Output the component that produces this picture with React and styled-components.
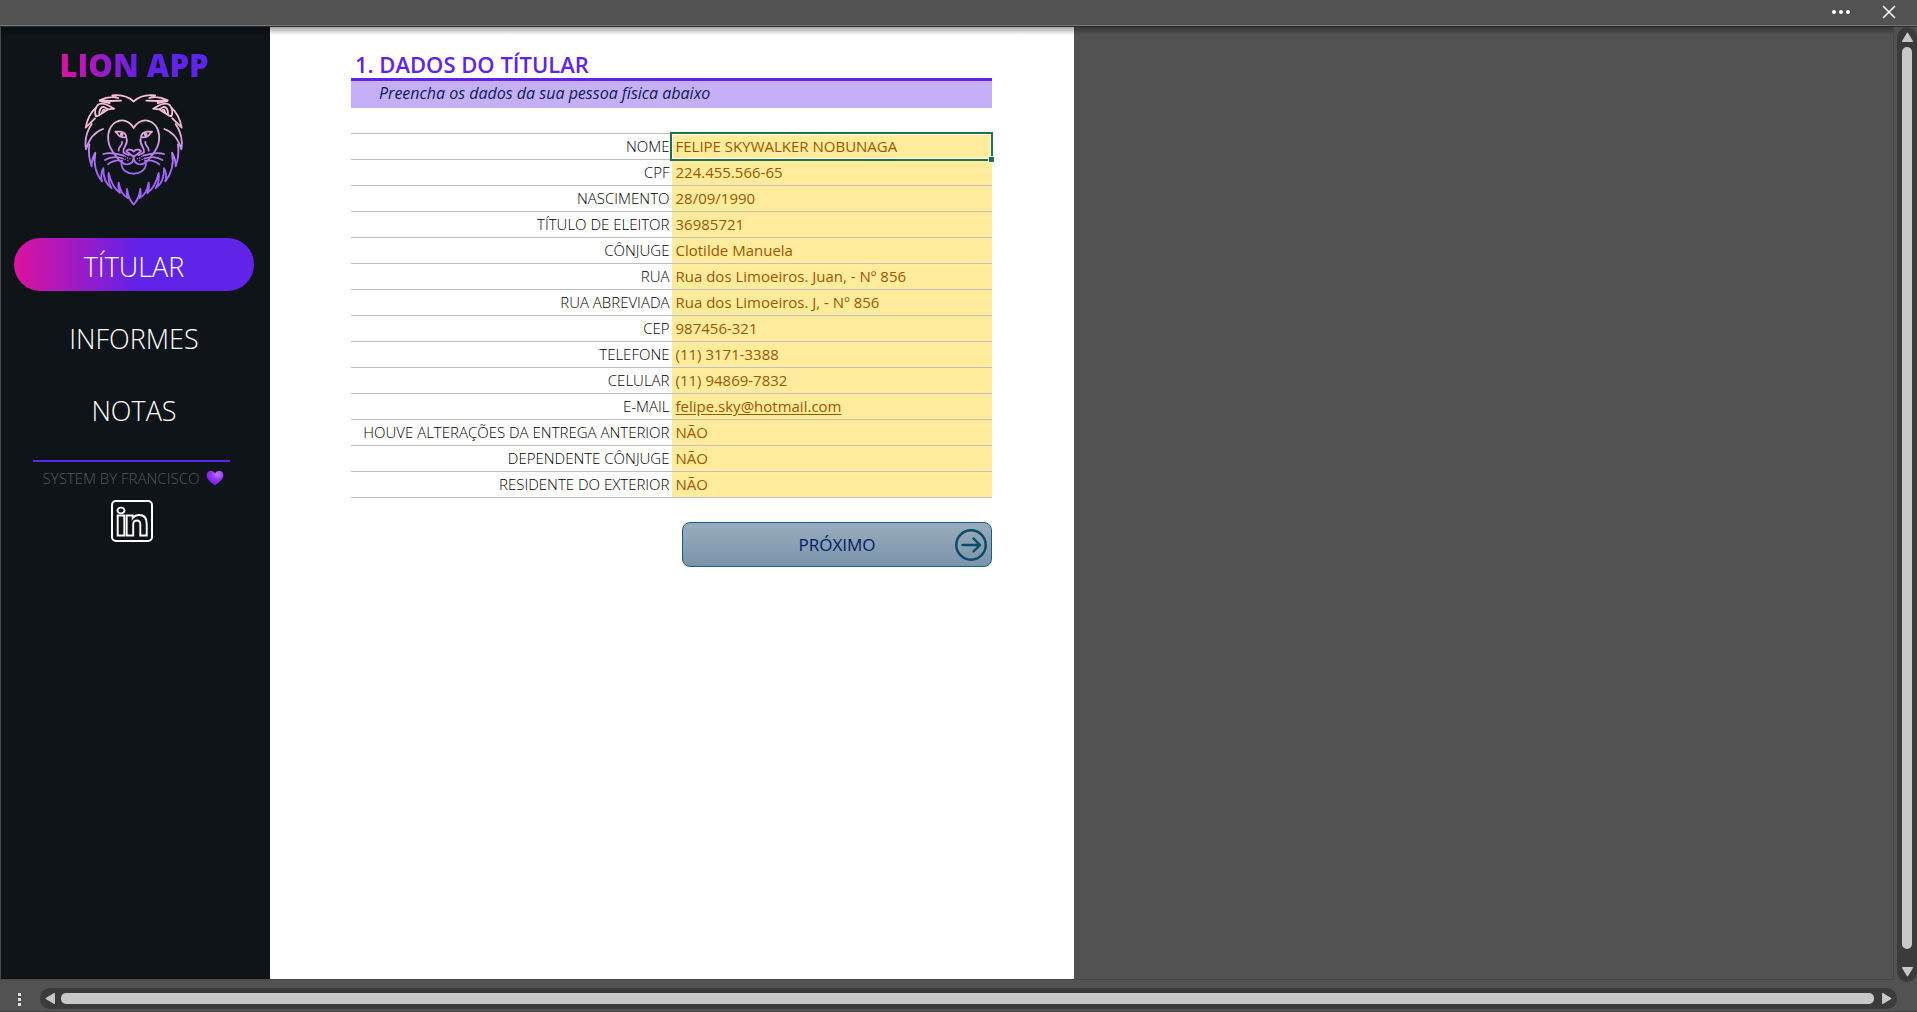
import React from 'react';
import styled, { createGlobalStyle, css } from 'styled-components';

const GlobalStyle = createGlobalStyle`
  *, *::before, *::after { box-sizing: border-box; }
  body {
    margin: 0;
    background: #525252;
    font-family: "Open Sans", "Noto Sans", sans-serif;
  }
  button { font: inherit; padding: 0; border: 0; background: none; cursor: pointer; }
`;

const Window = styled.div`
  display: flex;
  flex-direction: column;
  min-height: 100vh;
  background: #525252;
`;

const TitleBar = styled.header`
  display: flex;
  justify-content: flex-end;
  align-items: center;
  gap: 24px;
  height: 27px;
  padding: 0 16px 2px 0;
  border-bottom: 1px solid #2c2c2c;
  box-shadow: inset 0 -1px 0 #767676;
`;

const BarButton = styled.button`
  display: flex;
  align-items: center;
  justify-content: center;
  width: 24px;
  height: 24px;
  color: #ffffff;
`;

const Body = styled.div`
  display: flex;
  flex: 1;
`;

const Workspace = styled.div`
  position: relative;
  display: flex;
  flex: 1;
  margin: 0 3px 2px 0;
  border: solid #464646;
  border-width: 0 1px 1px;

  &::before {
    content: "";
    position: absolute;
    inset: 0 0 auto;
    height: 8px;
    background: linear-gradient(rgba(0, 0, 0, 0.35), rgba(0, 0, 0, 0));
  }
`;

const Sidebar = styled.aside`
  display: flex;
  flex-direction: column;
  align-items: center;
  width: 269px;
  padding: 16px 16px 16px 13px;
  background: #0e1418;
`;

const Brand = styled.h1`
  margin: 0;
  font-size: 31px;
  line-height: 44px;
  font-weight: 800;
  color: transparent;
  background: linear-gradient(90deg, #dc12a0, #6023e8 55%);
  background-clip: text;
`;

const Lion = styled.svg`
  display: block;
  width: 102px;
  height: 114px;
  margin-top: 6px;
`;

const Menu = styled.nav`
  display: flex;
  flex-direction: column;
  align-self: stretch;
  gap: 19px;
  margin: 31px 0 0;
`;

const MenuButton = styled.button`
  height: 53px;
  padding-top: 4px;
  border-radius: 27px;
  color: #ffffff;
  font-size: 27px;
  line-height: 48px;
  font-weight: 300;
  ${(p) => p.$active && css`
    background: linear-gradient(90deg, #dc12a0, #6023e8 52%);
  `}
`;

const Credits = styled.footer`
  display: flex;
  flex-direction: column;
  align-items: center;
  align-self: flex-start;
  width: 197px;
  margin: 25px 0 0 19px;
  border-top: 2px solid #6023e8;
`;

const Signature = styled.p`
  display: flex;
  align-items: center;
  gap: 7px;
  margin: 0 0 0 4px;
  color: #595959;
  font-size: 15px;
  line-height: 32px;
  font-weight: 300;
  white-space: nowrap;
`;

const SocialLink = styled.a`
  display: flex;
  margin-top: 6px;
  color: #ffffff;
`;

const Sheet = styled.main`
  width: 804px;
  padding: 24px 82px 24px 81px;
  background: #ffffff;
`;

const Title = styled.h2`
  margin: 0;
  padding-left: 4px;
  border-bottom: 3px solid #6023e8;
  color: #6023e8;
  font-size: 22px;
  line-height: 27px;
  font-weight: 600;
`;

const Hint = styled.p`
  margin: 0 0 25px;
  padding-left: 28px;
  background: #c5b0f7;
  color: #0a1a5c;
  font-size: 16px;
  line-height: 24px;
  height: 27px;
  font-style: italic;
`;

const Fields = styled.table`
  width: 100%;
  border-collapse: collapse;
  table-layout: fixed;
  font-size: 15px;
  line-height: 25px;
  white-space: nowrap;
`;

const FieldRow = styled.tr`
  height: 26px;
  border: solid #bfbfbf;
  border-width: 1px 0;
`;

const FieldName = styled.th`
  width: 50%;
  padding: 0 2px 0 0;
  color: #000000;
  font-weight: 300;
  text-align: right;
`;

const FieldValue = styled.td`
  position: relative;
  z-index: ${(p) => (p.$selected ? 1 : 0)};
  padding: 0 0 0 4px;
  background: #ffeb9c;
  background-clip: padding-box;
  color: #9c5700;
`;

const Selection = styled.span`
  position: absolute;
  inset: -2px -1px -2px -2px;
  border: 2px solid #217346;
  box-shadow: inset 0 0 0 1px #ffffff;

  &::after {
    content: "";
    position: absolute;
    right: -4px;
    bottom: -4px;
    width: 7px;
    height: 7px;
    background: #217346;
    border: 1px solid #ffffff;
  }
`;

const MailLink = styled.a`
  color: inherit;
  text-underline-offset: 2px;
`;

const NextButton = styled.button`
  display: grid;
  grid-template-columns: 36px 1fr 36px;
  align-items: center;
  width: 310px;
  height: 45px;
  margin: 24px 0 0 auto;
  border: 1px solid #156082;
  border-radius: 8px;
  background: linear-gradient(#9aacbc, #7a94ab);
  color: #001d66;
  font-size: 17px;

  span { grid-column: 2; }
`;

const BottomBar = styled.footer`
  display: flex;
  align-items: center;
  height: 30px;
  padding: 3px 20px 0 17px;
  border-bottom: 1px solid #444444;
`;

const Grip = styled.span`
  display: grid;
  gap: 2px;
  width: 23px;
  padding: 2px 0 0 1px;

  i { width: 3px; height: 3px; background: #e0e0e0; }
`;

const Track = styled.div`
  display: flex;
  align-items: center;
  background: #3b3b3b;
  border-radius: 10px;
  ${(p) => p.$vertical ? css`
    flex-direction: column;
    width: 20px;
    padding: 5px 0;
  ` : css`
    flex: 1;
    height: 21px;
    padding: 0 5px;
  `}
`;

const Thumb = styled.div`
  flex: 1;
  border-radius: 5px;
  background: #c8c8c8;
  ${(p) => p.$vertical ? css`
    width: 10px;
    margin: 4px 0 17px;
  ` : css`
    height: 11px;
    margin: 0 7px 0 5px;
  `}
`;

const arrows = {
  up: 'M5 1 9.500 8.500H.5Z',
  down: 'M5 9 .5 1.500h9Z',
  left: 'M1 5 8.500 .5v9Z',
  right: 'M9 5 1.500 9.500V.5Z',
};

const BarArrow = styled.svg`
  flex: none;
  width: 11px;
  height: 11px;
`;

const Arrow = ({ to }) => (
  <BarArrow viewBox="0 0 10 10" aria-hidden="true">
    <path d={arrows[to]} fill="#c8c8c8" stroke="#c8c8c8" strokeLinejoin="round" />
  </BarArrow>
);

const HalfLion = () => (
  <>
    <path d="M402 303C386 288 364 282 338 285L355 293C336 287 316 292 300 300L332 302L364 301" />
    <path d="M301 302L330 308" />
    <path d="M343 325L328 316C314 308 300 308 294 314C286 324 284 336 289 348L298 345L326 327L343 325" />
    <path d="M299 341C299 328 303 319 313 320L324 326M308 337C308 330 311 327 316 329" />
    <path d="M289 322C271 338 262 360 258 382L286 354" />
    <path d="M276 371C260 395 254 420 259 447C268 416 286 394 310 386" />
    <path d="M269 432C266 454 268 476 276 498C276 480 280 468 287 457C280 491 290 523 307 543C303 529 304 516 311 504C310 530 319 552 336 564C327 548 325 532 327 518C333 544 344 566 361 578C356 568 355 558 357 547C361 570 370 586 384 593C380 584 380 576 382 566C385 587 392 603 402 612" />
    <path d="M402 382C388 362 373 357 356 362C331 371 323 397 326 421C328 444 342 458 350 468C361 488 377 495 388 491C396 489 400 482 402 477" />
    <path d="M347 394H362C372 395 379 402 380 411C367 412 357 408 353 400Z" />
    <circle cx="366" cy="402" r="3" />
    <path d="M381 416C386 434 368 440 371 456C376 460 382 462 387 465" />
    <path d="M367 425C370 438 354 438 357 451" />
    <path d="M402 453C396 446 386 446 380 452C386 458 394 465 402 469V478" />
    <path d="M365 491C367 511 384 520 402 520" />
    <path d="M311 461C330 455 352 459 373 466M316 479C333 468 350 468 370 475M325 492C340 481 354 478 368 482" />
    <path d="M377 469h1M376 477h1M383 473h1M384 480h1M390 475h1" strokeWidth="4" />
  </>
);

const LionMark = () => (
  <Lion viewBox="250 278 306 342" fill="none" stroke="url(#mane)" strokeWidth="5.500" strokeLinecap="round" strokeLinejoin="round" role="img" aria-label="Lion">
    <defs>
      <linearGradient id="mane" gradientUnits="userSpaceOnUse" x1="0" y1="350" x2="0" y2="500">
        <stop offset="0" stopColor="#f6c1d6" />
        <stop offset="0.35" stopColor="#dfa6dc" />
        <stop offset="1" stopColor="#a164fb" />
      </linearGradient>
    </defs>
    <HalfLion />
    <g transform="translate(804 0) scale(-1 1)"><HalfLion /></g>
  </Lion>
);

const Heart = () => (
  <svg width="18" height="16" viewBox="0 0 18 16" aria-hidden="true">
    <defs>
      <radialGradient id="glow" cx="0.65" cy="0.25" r="0.75">
        <stop offset="0" stopColor="#bd7bff" />
        <stop offset="0.5" stopColor="#9433f5" />
        <stop offset="1" stopColor="#7a1fe8" />
      </radialGradient>
    </defs>
    <path d="M9 15.300C5 12.500 .6 9.300.6 5.200.6 2.500 2.500.8 4.900.8 6.700.8 8.200 1.700 9 3.200 9.800 1.700 11.300.8 13.100.8c2.400 0 4.300 1.700 4.300 4.400C17.400 9.300 13 12.500 9 15.300Z" fill="url(#glow)" />
  </svg>
);

const LinkedIn = () => (
  <svg width="42" height="42" viewBox="0 0 42 42" fill="none" stroke="currentColor" strokeWidth="1.900" aria-hidden="true">
    <rect x="1" y="1" width="40" height="40" rx="4" strokeWidth="2" />
    <ellipse cx="10" cy="10.500" rx="3.500" ry="2.900" />
    <path d="M6.700 15.500h6.600v20H6.700ZM15.700 15.500h6v2.500c2-2.500 4-3 6.300-3 4.600 0 7.700 3 7.700 8.500v12h-6.400V24.500c0-2.500-1-4-3.400-4s-3.700 1.700-3.700 4v11h-6.500Z" />
  </svg>
);

const CircleArrow = () => (
  <svg width="32" height="32" viewBox="0 0 32 32" fill="none" stroke="#0b4a6b" strokeWidth="2.400" strokeLinecap="round" strokeLinejoin="round" aria-hidden="true">
    <circle cx="16" cy="16" r="14.700" />
    <path d="M7.500 16h17M18.500 9.500 25 16l-6.500 6.500" />
  </svg>
);

const menu = ['TÍTULAR', 'INFORMES', 'NOTAS'];

const fields = [
  ['NOME', 'FELIPE SKYWALKER NOBUNAGA'],
  ['CPF', '224.455.566-65'],
  ['NASCIMENTO', '28/09/1990'],
  ['TÍTULO DE ELEITOR', '36985721'],
  ['CÔNJUGE', 'Clotilde Manuela'],
  ['RUA', 'Rua dos Limoeiros. Juan, - Nº 856'],
  ['RUA ABREVIADA', 'Rua dos Limoeiros. J, - Nº 856'],
  ['CEP', '987456-321'],
  ['TELEFONE', '(11) 3171-3388'],
  ['CELULAR', '(11) 94869-7832'],
  ['E-MAIL', 'felipe.sky@hotmail.com'],
  ['HOUVE ALTERAÇÕES DA ENTREGA ANTERIOR', 'NÃO'],
  ['DEPENDENTE CÔNJUGE', 'NÃO'],
  ['RESIDENTE DO EXTERIOR', 'NÃO'],
];

export default function App() {
  return (
    <Window>
      <GlobalStyle />
      <TitleBar>
        <BarButton aria-label="Mais opções">
          <svg width="20" height="6" viewBox="0 0 20 6" fill="currentColor"><circle cx="3" cy="3" r="2" /><circle cx="10" cy="3" r="2" /><circle cx="17" cy="3" r="2" /></svg>
        </BarButton>
        <BarButton aria-label="Fechar">
          <svg width="14" height="14" viewBox="0 0 14 14" stroke="currentColor" strokeWidth="1.500"><path d="M1 1l12 12M13 1 1 13" /></svg>
        </BarButton>
      </TitleBar>
      <Body>
        <Workspace>
          <Sidebar>
            <Brand>LION APP</Brand>
            <LionMark />
            <Menu>
              {menu.map((item, i) => (
                <MenuButton key={item} $active={i === 0}>{item}</MenuButton>
              ))}
            </Menu>
            <Credits>
              <Signature>SYSTEM BY FRANCISCO <Heart /></Signature>
              <SocialLink href="#linkedin" aria-label="LinkedIn"><LinkedIn /></SocialLink>
            </Credits>
          </Sidebar>
          <Sheet>
            <Title>1. DADOS DO TÍTULAR</Title>
            <Hint>Preencha os dados da sua pessoa física abaixo</Hint>
            <Fields>
              <tbody>
                {fields.map(([name, value], i) => (
                  <FieldRow key={name}>
                    <FieldName scope="row">{name}</FieldName>
                    <FieldValue $selected={i === 0}>
                      {value.includes('@') ? <MailLink href={`mailto:${value}`}>{value}</MailLink> : value}
                      {i === 0 && <Selection />}
                    </FieldValue>
                  </FieldRow>
                ))}
              </tbody>
            </Fields>
            <NextButton><span>PRÓXIMO</span><CircleArrow /></NextButton>
          </Sheet>
        </Workspace>
        <Track $vertical>
          <Arrow to="up" />
          <Thumb $vertical />
          <Arrow to="down" />
        </Track>
      </Body>
      <BottomBar>
        <Grip><i /><i /><i /></Grip>
        <Track>
          <Arrow to="left" />
          <Thumb />
          <Arrow to="right" />
        </Track>
      </BottomBar>
    </Window>
  );
}
